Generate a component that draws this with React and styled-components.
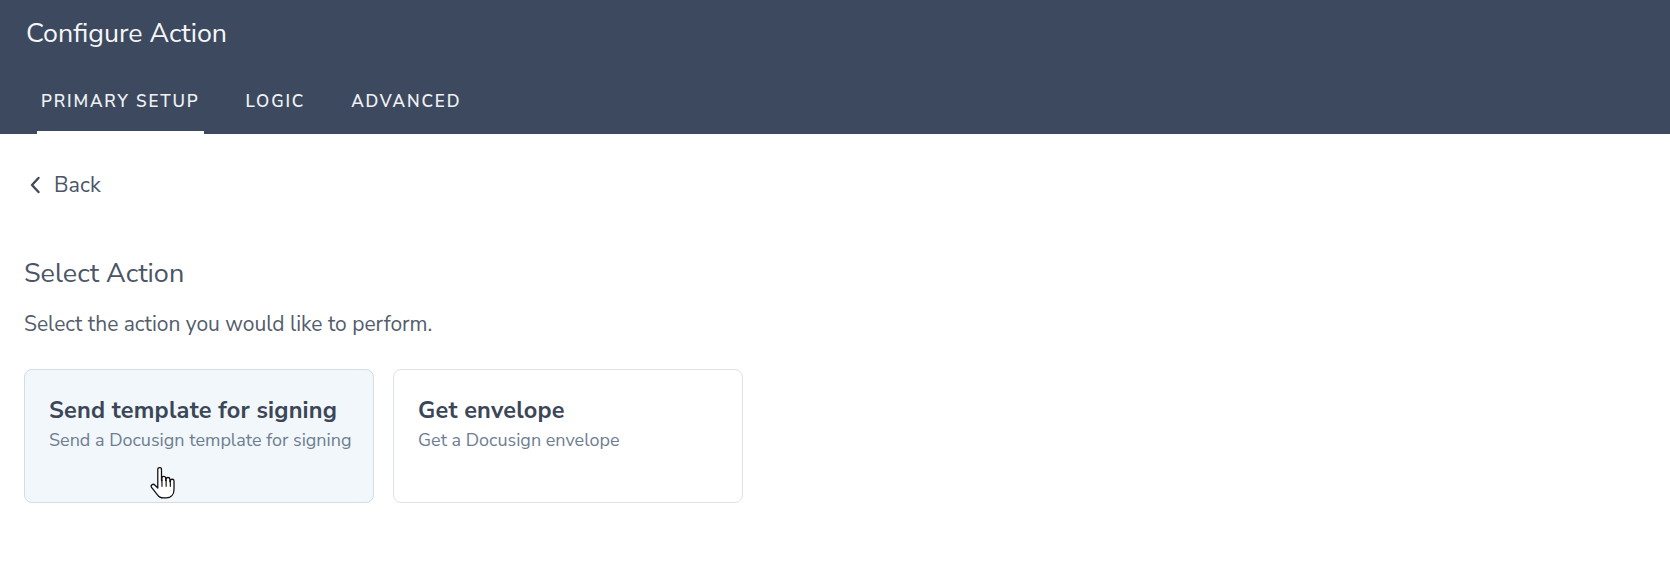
import React from "react";
import styled, { createGlobalStyle } from "styled-components";

const GlobalStyle = createGlobalStyle`
  body {
    margin: 0;
    background: #ffffff;
    font-family: 'Nunito Sans', 'Lato', 'Open Sans', sans-serif;
  }
`;

const Page = styled.div`
  width: 1670px;
  height: 566px;
  overflow: hidden;
  background: #ffffff;
`;

const Header = styled.header`
  background-color: #3c495e;
  height: 134px;
  box-sizing: border-box;
  padding: 17px 0 0 26px;
`;

const Title = styled.h1`
  margin: 0;
  font-size: 26.8px;
  line-height: 32px;
  font-weight: 400;
  color: #f4f6f8;
`;

const Tabs = styled.nav`
  display: flex;
  gap: 38px;
  margin: 33px 0 0 11px;
`;

const Tab = styled.a`
  display: block;
  padding: 10px 4px 19px;
  font-size: 17px;
  line-height: 20px;
  font-weight: 600;
  letter-spacing: 1.85px;
  text-transform: uppercase;
  color: #eef1f4;
  text-decoration: none;
  border-bottom: 3px solid ${p => (p.$active ? "#ffffff" : "transparent")};
`;

const Body = styled.main`
  padding: 0 0 0 24px;
`;

const BackLink = styled.a`
  display: flex;
  align-items: center;
  gap: 13px;
  margin-top: 39px;
  margin-left: 5px;
  height: 24px;
  font-size: 21.5px;
  color: #4a5566;
  text-decoration: none;
`;

const SectionTitle = styled.h2`
  margin: 60px 0 0;
  font-size: 27px;
  line-height: 34px;
  font-weight: 400;
  color: #4b5565;
`;

const Description = styled.p`
  margin: 20px 0 0;
  font-size: 21px;
  line-height: 26px;
  color: #535d6b;
`;

const CardRow = styled.div`
  display: flex;
  gap: 19px;
  margin-top: 32px;
`;

const Card = styled.button`
  position: relative;
  width: 350px;
  height: 134px;
  box-sizing: border-box;
  padding: 25px 0 0 24px;
  text-align: left;
  font-family: inherit;
  background: ${p => (p.$hover ? "#f1f7fa" : "#ffffff")};
  border: 1px solid ${p => (p.$hover ? "#d3dde3" : "#dde2e7")};
  border-radius: 8px;
  display: flex;
  flex-direction: column;
  cursor: pointer;
`;

const CardTitle = styled.span`
  font-size: 23.5px;
  line-height: 30px;
  font-weight: 700;
  letter-spacing: 0.2px;
  color: #3b4657;
`;

const CardText = styled.span`
  margin-top: 3px;
  font-size: 18px;
  line-height: 24px;
  color: #6f7d92;
`;

const Pointer = styled.svg`
  position: absolute;
  left: 124px;
  top: 96px;
  width: 28px;
  height: 36px;
`;

const Chevron = () => (
  <svg width="12" height="18" viewBox="0 0 12 18">
    <path d="M9.5 2 L3 9 L9.5 16" fill="none" stroke="#3f4a5a" strokeWidth="2.4" strokeLinecap="round" strokeLinejoin="round" />
  </svg>
);

const HandCursor = () => (
  <Pointer viewBox="0 0 24 31">
    <path
      d="M7.5 3a1.6 1.6 0 0 1 3.2 0v9.5h.4v-2a1.6 1.6 0 0 1 3.2 0v2h.4v-1a1.6 1.6 0 0 1 3.2 0v2h.4v-.5a1.6 1.6 0 0 1 3.2 0v7c0 4.6-2.6 7.5-6.8 7.5h-2.2c-2.6 0-4.2-1-5.6-3.1L2.3 18.6a1.7 1.7 0 0 1 2.6-2.2L7.5 19Z"
      fill="#ffffff"
      stroke="#111111"
      strokeWidth="1.1"
      strokeLinejoin="round"
    />
    <path d="M11.1 12.5v5M14.7 12.5v5M18.3 13.5v4" stroke="#111111" strokeWidth="1" strokeLinecap="round" />
  </Pointer>
);

const actions = [
  { title: "Send template for signing", text: "Send a Docusign template for signing", hover: true },
  { title: "Get envelope", text: "Get a Docusign envelope" },
];

export default function App() {
  return (
    <Page>
      <GlobalStyle />
      <Header>
        <Title>Configure Action</Title>
        <Tabs>
          <Tab $active>Primary Setup</Tab>
          <Tab>Logic</Tab>
          <Tab>Advanced</Tab>
        </Tabs>
      </Header>
      <Body>
        <BackLink>
          <Chevron />
          Back
        </BackLink>
        <SectionTitle>Select Action</SectionTitle>
        <Description>Select the action you would like to perform.</Description>
        <CardRow>
          {actions.map(a => (
            <Card key={a.title} $hover={a.hover}>
              <CardTitle>{a.title}</CardTitle>
              <CardText>{a.text}</CardText>
              {a.hover && <HandCursor />}
            </Card>
          ))}
        </CardRow>
      </Body>
    </Page>
  );
}
